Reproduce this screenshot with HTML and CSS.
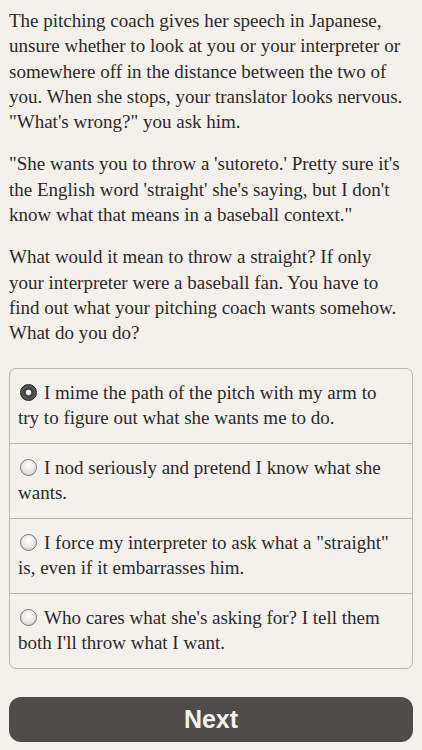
FILE: index.html
```html
<!DOCTYPE html>
<html>
<head>
<meta charset="utf-8">
<link rel="stylesheet" href="styles.css">
</head>
<body>
<div class="page">
  <p>The pitching coach gives her speech in Japanese, unsure whether to look at you or your interpreter or somewhere off in the distance between the two of you. When she stops, your translator looks nervous. "What's wrong?" you ask him.</p>
  <p>"She wants you to throw a 'sutoreto.' Pretty sure it's the English word 'straight' she's saying, but I don't know what that means in a baseball context."</p>
  <p>What would it mean to throw a straight? If only your interpreter were a baseball fan. You have to find out what your pitching coach wants somehow. What do you do?</p>
  <div class="choices">
    <div class="choice"><span class="radio checked"></span>I mime the path of the pitch with my arm to try to figure out what she wants me to do.</div>
    <div class="choice"><span class="radio"></span>I nod seriously and pretend I know what she wants.</div>
    <div class="choice"><span class="radio"></span>I force my interpreter to ask what a "straight" is, even if it embarrasses him.</div>
    <div class="choice"><span class="radio"></span>Who cares what she's asking for? I tell them both I'll throw what I want.</div>
  </div>
  <button class="next">Next</button>
</div>
</body>
</html>
```
FILE: styles.css
```css
html, body {
  margin: 0;
  padding: 0;
  background: #f4f1ed;
}
.page {
  padding: 8px 9px 0 9px;
  font-family: "Liberation Serif", "DejaVu Serif", serif;
  font-size: 19px;
  line-height: 25.3px;
  color: #2b2a29;
}
p {
  margin: 0 6px 17px 0;
}
.choices {
  margin-top: 22px;
  border: 1px solid #b9b7b4;
  border-radius: 7px;
}
.choice {
  padding: 11px 16px 12px 8px;
  min-height: 51px;
  border-top: 1px solid #b9b7b4;
}
.choice:first-child {
  border-top: none;
}
.radio {
  display: inline-block;
  box-sizing: border-box;
  width: 17px;
  height: 17px;
  border-radius: 50%;
  border: 1px solid #777573;
  background: radial-gradient(circle at 50% 35%, #ffffff 0%, #e8e7e5 55%, #c6c5c3 100%);
  vertical-align: -2px;
  margin: 0 7px 0 2px;
}
.radio.checked {
  border: 1px solid #1e1e1e;
  background: radial-gradient(circle at 50% 50%, #f5f5f5 0%, #eeeeee 22%, #3a3a3a 31%, #5a5a5a 60%, #262626 100%);
}
.next {
  display: block;
  width: 100%;
  height: 45px;
  margin-top: 28px;
  border: none;
  border-radius: 12px;
  background: #4f4d4b;
  color: #f4f1ed;
  font-family: "Liberation Sans", Arial, sans-serif;
  font-weight: bold;
  font-size: 25px;
}
```
